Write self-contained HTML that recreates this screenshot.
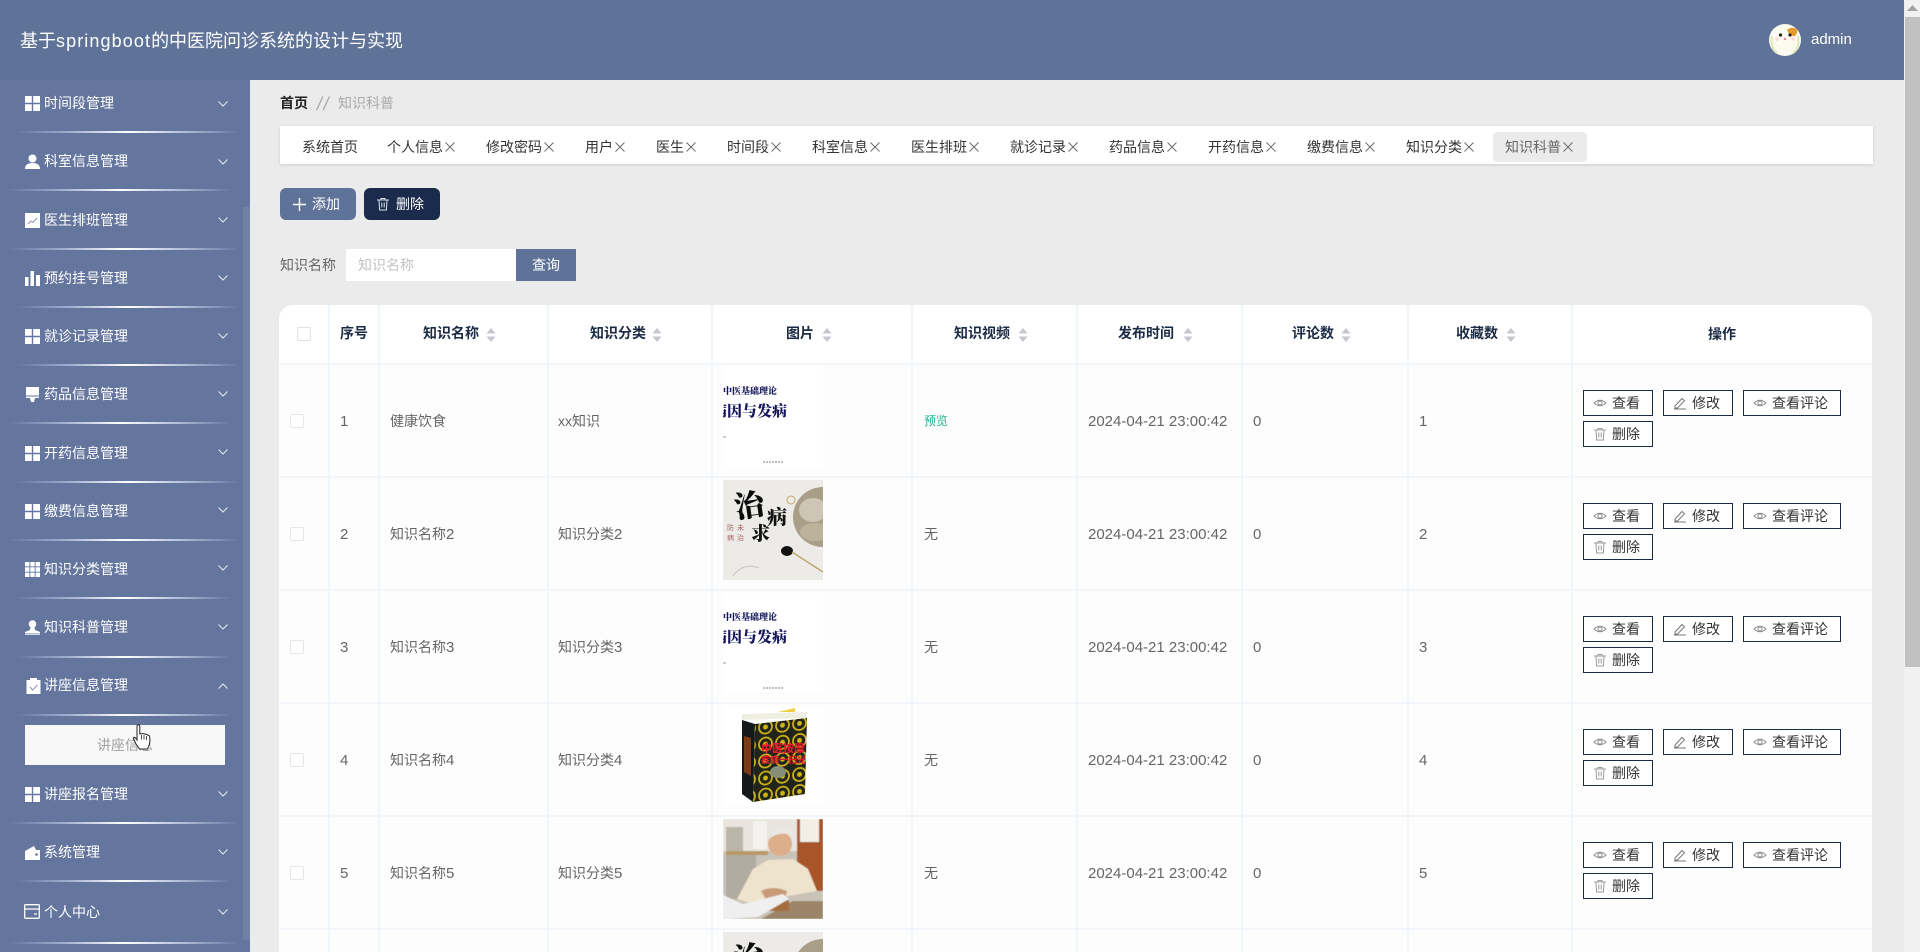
<!DOCTYPE html>
<html lang="zh"><head><meta charset="utf-8"><title>知识科普</title>
<style>
*{box-sizing:border-box;margin:0;padding:0}
html,body{width:1920px;height:952px;overflow:hidden;background:#ebebeb;font-family:"Liberation Sans","Noto Sans CJK SC",sans-serif;font-size:14px}
.a{position:absolute}
#hd{left:0;top:0;width:1904px;height:80px;background:#5f7398;color:#fff}
#side{left:0;top:80px;width:250px;height:872px;background:#64759e}
.mi{position:absolute;left:44px;color:#fff;font-size:14px;line-height:20px;height:20px;white-space:nowrap}
.ic{position:absolute;left:25px;width:15px;height:15px}
.ch{position:absolute;left:218px;width:10px;height:6px}
.ln{position:absolute;height:2px;margin-top:1px;background:linear-gradient(90deg,rgba(180,195,225,0),#a3b1d1 25%,#fff 50%,#b2bfda 75%,rgba(180,195,225,0))}
.tab{position:absolute;top:132px;height:30px;line-height:30px;color:#333;white-space:nowrap}
.tab svg{position:absolute;top:10px;width:10px;height:10px}
.th{position:absolute;top:0;height:59px;line-height:57px;font-weight:700;color:#1c2b45;white-space:nowrap}
.so{position:absolute;top:23px;width:10px;height:14px}
.vl{position:absolute;top:0;width:2px;background:#f0f7fb;height:650px}
.row{position:absolute;left:0;width:1593px;height:113px;background:#fdfdfe;border-top:2px solid #f2f6fa}
.t{position:absolute;top:1px;height:111px;line-height:111px;color:#666;white-space:nowrap}
.t i{font-style:normal;font-size:15px}
.n{font-size:15px}
.cb{position:absolute;left:11px;top:49px;width:14px;height:14px;border:1px solid #e3e6ea;background:#fff;border-radius:2px}
.b{position:absolute;height:26px;border:1px solid #1c2b45;background:#fff;color:#333;line-height:24px;white-space:nowrap;width:70px}
.b span{position:absolute;left:28px;top:0}
.b svg{position:absolute;left:9px;top:5px;width:14px;height:14px}
.im{position:absolute;left:444px;top:2px;width:100px;height:100px;overflow:hidden}
</style></head><body>

<div class="a" id="hd">
<div class="a" style="left:20px;top:28px;font-size:18px;line-height:26px;white-space:nowrap">基于<span style="letter-spacing:1.1px">springboot</span>的中医院问诊系统的设计与实现</div>
<svg class="a" style="left:1769px;top:24px" width="32" height="32" viewBox="0 0 32 32"><circle cx="16" cy="16" r="16" fill="#fbfbef"/><path d="M3 12Q1 24 8 29M29 12Q31 24 24 29" stroke="#e4e8b4" stroke-width="2" fill="none"/><path d="M18 6Q22 2 28 5Q29 9 26 12Q21 13 18 6Z" fill="#e59a2c"/><circle cx="11.500" cy="11" r="1.600" fill="#222"/><circle cx="21" cy="11" r="1.600" fill="#222"/><circle cx="16" cy="15" r="1.200" fill="#e88"/><circle cx="8" cy="15" r="2" fill="#fbdede"/><circle cx="24" cy="15" r="2" fill="#fbdede"/></svg>
<div class="a" style="left:1811px;top:30px;line-height:20px;color:#fff;font-size:15px">admin</div>
</div>

<div class="a" style="left:1904px;top:0;width:16px;height:952px;background:#f1f1f1"></div>
<div class="a" style="left:1905px;top:17px;width:15px;height:650px;background:#c1c1c1"></div>
<svg class="a" style="left:1907px;top:5px" width="11" height="7"><path d="M0 6L5.500 0L11 6Z" fill="#a3a3a3"/></svg>

<div class="a" id="side"></div>
<div class="a" style="left:243px;top:207px;width:7px;height:733px;background:#6f81a5"></div>

<svg width="0" height="0" style="position:absolute"><defs>
<symbol id="g" viewBox="0 0 15 15"><path fill="#fff" d="M0 0h6.800v6.800H0zM8.200 0H15v6.800H8.200zM0 8.200h6.800V15H0zM8.200 8.200H15V15H8.200z"/></symbol>
<symbol id="chv" viewBox="0 0 10 6"><path d="M.5.500L5 5 9.500.5" fill="none" stroke="#e6eaf3" stroke-width="1"/></symbol>
<symbol id="chu" viewBox="0 0 10 6"><path d="M.5 5.500L5 1l4.500 4.500" fill="none" stroke="#e6eaf3" stroke-width="1"/></symbol>
<symbol id="x" viewBox="0 0 10 10"><path d="M.5.500l9 9M9.500.5l-9 9" stroke="#666" stroke-width=".9" fill="none"/></symbol>
<symbol id="eye" viewBox="0 0 14 14"><path d="M1 7Q7 1.500 13 7Q7 12.500 1 7Z" fill="none" stroke="#8c8c8c"/><circle cx="7" cy="7" r="2" fill="none" stroke="#8c8c8c"/></symbol>
<symbol id="pen" viewBox="0 0 14 14"><path d="M2 10L9 2.500l2.500 2.300L4.500 12H2zM1 13h12" fill="none" stroke="#777"/></symbol>
<symbol id="tr" viewBox="0 0 14 14"><path d="M1 3h12M3 3l.6 10h6.800L11 3M5 3V1.500h4V3M5.800 5.500v5M8.200 5.500v5" fill="none" stroke="#9a9a9a"/></symbol>
<symbol id="srt" viewBox="0 0 10 14"><path d="M5 0L9.500 5.500H.5zM5 14L.5 8.500h9z" fill="#c4c7cc"/></symbol>
<pattern id="sw" width="17" height="17" patternUnits="userSpaceOnUse" patternTransform="skewY(-6)"><rect width="17" height="17" fill="#20241a"/><circle cx="8.500" cy="8.500" r="6.500" fill="none" stroke="#cdb316" stroke-width="1.800"/><circle cx="8.500" cy="8.500" r="2.500" fill="#cdb316"/></pattern>
<filter id="sf"><feGaussianBlur stdDeviation=".6"/></filter>
</defs></svg>

<svg class="ic" style="top:96px"><use href="#g"/></svg><div class="mi" style="top:93px">时间段管理</div><svg class="ch" style="top:101px"><use href="#chv"/></svg>
<div class="ln" style="left:16px;width:224px;top:130px"></div>
<svg class="ic" style="top:154px" viewBox="0 0 15 15"><circle cx="7.500" cy="4.500" r="4" fill="#fff"/><path d="M0 15Q0 9 7.500 9T15 15Z" fill="#fff"/></svg><div class="mi" style="top:151px">科室信息管理</div><svg class="ch" style="top:159px"><use href="#chv"/></svg>
<div class="ln" style="left:8px;width:224px;top:188px"></div>
<svg class="ic" style="top:213px" viewBox="0 0 15 15"><rect width="15" height="15" fill="#fff"/><path d="M3 11l3-3 2 1.500L12 5" stroke="#8794b3" fill="none"/></svg><div class="mi" style="top:210px">医生排班管理</div><svg class="ch" style="top:217px"><use href="#chv"/></svg>
<div class="ln" style="left:8px;width:232px;top:247px"></div>
<svg class="ic" style="top:271px" viewBox="0 0 15 15"><path fill="#fff" d="M0 6h3.500v9H0zM5.500 0H9v15H5.500zM11 4h4v11h-4z"/></svg><div class="mi" style="top:268px">预约挂号管理</div><svg class="ch" style="top:275px"><use href="#chv"/></svg>
<div class="ln" style="left:16px;width:224px;top:305px"></div>
<svg class="ic" style="top:329px"><use href="#g"/></svg><div class="mi" style="top:326px">就诊记录管理</div><svg class="ch" style="top:333px"><use href="#chv"/></svg>
<div class="ln" style="left:16px;width:224px;top:363px"></div>
<svg class="ic" style="top:387px" viewBox="0 0 15 15"><path fill="#fff" d="M1 0h13v8.500H1zM1 9.500h13V11H10l-1 4H6l-1-4H1z"/></svg><div class="mi" style="top:384px">药品信息管理</div><svg class="ch" style="top:391px"><use href="#chv"/></svg>
<div class="ln" style="left:8px;width:224px;top:421px"></div>
<svg class="ic" style="top:446px"><use href="#g"/></svg><div class="mi" style="top:443px">开药信息管理</div><svg class="ch" style="top:449px"><use href="#chv"/></svg>
<div class="ln" style="left:16px;width:224px;top:480px"></div>
<svg class="ic" style="top:504px"><use href="#g"/></svg><div class="mi" style="top:501px">缴费信息管理</div><svg class="ch" style="top:507px"><use href="#chv"/></svg>
<div class="ln" style="left:8px;width:232px;top:538px"></div>
<svg class="ic" style="top:562px" viewBox="0 0 15 15"><path fill="#fff" d="M0 0h4.400v4.400H0zM5.300 0h4.400v4.400H5.300zM10.600 0H15v4.400h-4.400zM0 5.300h4.400v4.400H0zM5.300 5.300h4.400v4.400H5.300zM10.600 5.300H15v4.400h-4.400zM0 10.600h4.400V15H0zM5.300 10.600h4.400V15H5.300zM10.600 10.600H15V15h-4.400z"/></svg><div class="mi" style="top:559px">知识分类管理</div><svg class="ch" style="top:565px"><use href="#chv"/></svg>
<div class="ln" style="left:16px;width:216px;top:596px"></div>
<svg class="ic" style="top:620px" viewBox="0 0 15 15"><circle cx="7.500" cy="4" r="3.800" fill="#fff"/><path d="M5.500 7h4l.5 3 5 2v1.500H0V12l5-2zM0 14.200h15V15H0z" fill="#fff"/></svg><div class="mi" style="top:617px">知识科普管理</div><svg class="ch" style="top:624px"><use href="#chv"/></svg>
<div class="ln" style="left:16px;width:216px;top:655px"></div>
<svg class="ic" style="top:678px;left:26px;height:16px" viewBox="0 0 14 16"><path fill="#fff" d="M0 2h3.500V0h7v2H14v14H0z"/><path d="M3.500 9l2.500 3 5-5" stroke="#8794b3" fill="none"/></svg><div class="mi" style="top:675px">讲座信息管理</div><svg class="ch" style="top:683px"><use href="#chu"/></svg>
<div class="ln" style="left:16px;width:216px;top:713px"></div>
<div class="a" style="left:25px;top:725px;width:200px;height:40px;background:#f8f8f8;color:#a0a0a0;text-align:center;line-height:40px">讲座信息</div>
<svg class="a" style="left:132px;top:724px" width="20" height="28" viewBox="0 0 20 28"><path d="M5 2.500Q5 .8 6.300.8T7.800 2.500V10L10.500 9.500 13 10 15.500 10.800 17.500 12Q18.500 17 17 21.500L15.500 25H7.500L4 20 1.500 14.500Q1.500 12.800 3 13.500L5 16Z" fill="#fff" stroke="#222"/><path d="M9.500 11v4.500M12 11v4.500M14.500 12v4" stroke="#222" stroke-width=".8"/></svg>
<svg class="ic" style="top:787px"><use href="#g"/></svg><div class="mi" style="top:784px">讲座报名管理</div><svg class="ch" style="top:791px"><use href="#chv"/></svg>
<div class="ln" style="left:8px;width:232px;top:821px"></div>
<svg class="ic" style="top:845px" viewBox="0 0 15 15"><path fill="#fff" d="M0 6L9 1l2 4h4v10H0z"/><circle cx="11.500" cy="9.500" r="1.300" fill="#64759e"/></svg><div class="mi" style="top:842px">系统管理</div><svg class="ch" style="top:849px"><use href="#chv"/></svg>
<div class="ln" style="left:16px;width:216px;top:879px"></div>
<svg class="ic" style="top:904px;left:24px;width:16px;height:15px" viewBox="0 0 16 15"><rect x=".7" y=".7" width="14.600" height="13.600" rx="1" fill="none" stroke="#fff" stroke-width="1.300"/><path d="M1 5h14M10 10h3" stroke="#fff" stroke-width="1.300"/></svg><div class="mi" style="top:902px">个人中心</div><svg class="ch" style="top:909px"><use href="#chv"/></svg>
<div class="ln" style="left:8px;width:232px;top:941px"></div>

<div class="a" style="left:280px;top:93px;line-height:20px;font-weight:700;color:#222">首页</div>
<div class="a" style="left:317px;top:94px;line-height:20px;color:#aaa;font-style:italic;font-size:18px;letter-spacing:1.500px">//</div>
<div class="a" style="left:338px;top:93px;line-height:20px;color:#aaa">知识科普</div>

<div class="a" style="left:280px;top:126px;width:1593px;height:38px;background:#fff;box-shadow:0 1px 3px rgba(0,0,0,.12)"></div>
<div class="a" style="left:1493px;top:132px;width:94px;height:30px;background:#ebebeb;border-radius:4px"></div>
<div class="tab" style="left:302px">系统首页</div>
<div class="tab" style="left:387px">个人信息<svg style="left:58px"><use href="#x"/></svg></div>
<div class="tab" style="left:486px">修改密码<svg style="left:58px"><use href="#x"/></svg></div>
<div class="tab" style="left:585px">用户<svg style="left:30px"><use href="#x"/></svg></div>
<div class="tab" style="left:656px">医生<svg style="left:30px"><use href="#x"/></svg></div>
<div class="tab" style="left:727px">时间段<svg style="left:44px"><use href="#x"/></svg></div>
<div class="tab" style="left:812px">科室信息<svg style="left:58px"><use href="#x"/></svg></div>
<div class="tab" style="left:911px">医生排班<svg style="left:58px"><use href="#x"/></svg></div>
<div class="tab" style="left:1010px">就诊记录<svg style="left:58px"><use href="#x"/></svg></div>
<div class="tab" style="left:1109px">药品信息<svg style="left:58px"><use href="#x"/></svg></div>
<div class="tab" style="left:1208px">开药信息<svg style="left:58px"><use href="#x"/></svg></div>
<div class="tab" style="left:1307px">缴费信息<svg style="left:58px"><use href="#x"/></svg></div>
<div class="tab" style="left:1406px">知识分类<svg style="left:58px"><use href="#x"/></svg></div>
<div class="tab" style="left:1505px;color:#666">知识科普<svg style="left:58px"><use href="#x"/></svg></div>

<div class="a" style="left:280px;top:188px;width:76px;height:32px;background:#5f7398;border-radius:6px;color:#fff;line-height:32px;padding-left:32px">添加</div>
<svg class="a" style="left:293px;top:198px" width="13" height="13"><path d="M6.500 0v13M0 6.500h13" stroke="#fff" stroke-width="1.400"/></svg>
<div class="a" style="left:364px;top:188px;width:76px;height:32px;background:#1a2b4c;border-radius:6px;color:#fff;line-height:32px;padding-left:32px">删除</div>
<svg class="a" style="left:376px;top:197px" width="14" height="14" viewBox="0 0 14 14"><path d="M1 3h12M3 3l.6 10h6.800L11 3M5 3V1.500h4V3M5.800 5.500v5M8.200 5.500v5" fill="none" stroke="#dfe4ee"/></svg>

<div class="a" style="left:280px;top:255px;line-height:20px;color:#666">知识名称</div>
<div class="a" style="left:346px;top:249px;width:170px;height:32px;background:#fff;color:#c3c3c3;line-height:32px;padding-left:12px">知识名称</div>
<div class="a" style="left:516px;top:249px;width:60px;height:32px;background:#5f7398;color:#fff;line-height:32px;text-align:center">查询</div>

<div class="a" id="tb" style="left:279px;top:305px;width:1593px;height:647px;background:#fff;border-radius:14px 14px 0 0;overflow:hidden">
<div style="position:absolute;left:18px;top:22px;width:14px;height:14px;border:1px solid #dfe2e6;border-radius:2px;background:#fff"></div>
<div class="th" style="left:61px">序号</div>
<div class="th" style="left:144px">知识名称</div><svg class="so" style="left:207px"><use href="#srt"/></svg>
<div class="th" style="left:311px">知识分类</div><svg class="so" style="left:373px"><use href="#srt"/></svg>
<div class="th" style="left:507px">图片</div><svg class="so" style="left:543px"><use href="#srt"/></svg>
<div class="th" style="left:675px">知识视频</div><svg class="so" style="left:739px"><use href="#srt"/></svg>
<div class="th" style="left:839px">发布时间</div><svg class="so" style="left:904px"><use href="#srt"/></svg>
<div class="th" style="left:1013px">评论数</div><svg class="so" style="left:1062px"><use href="#srt"/></svg>
<div class="th" style="left:1177px">收藏数</div><svg class="so" style="left:1227px"><use href="#srt"/></svg>
<div class="th" style="left:1429px;top:1px">操作</div>

<div class="row" style="top:58px"><div class="cb"></div><div class="t n" style="left:61px">1</div><div class="t" style="left:111px">健康饮食</div><div class="t" style="left:279px">xx知识</div>
<div class="im"><svg width="100" height="100" viewBox="0 0 100 100"><rect width="100" height="100" fill="#fff"/><text x="0" y="27" font-size="9" font-weight="900" fill="#14145a" font-family="'Noto Serif CJK SC',serif">中医基础理论</text><text x="-11" y="49" font-size="15" font-weight="900" fill="#14145a" font-family="'Noto Serif CJK SC',serif">病因与发病</text><path d="M0 70h3" stroke="#999"/><path d="M40 95h21" stroke="#aaa" stroke-width="1.500" stroke-dasharray="2 1"/></svg></div>
<div class="t" style="left:645px;font-size:12px;color:#1fb38f">预览</div><div class="t n" style="left:809px">2024-04-21 23:00:42</div><div class="t n" style="left:974px">0</div><div class="t n" style="left:1140px">1</div>
<div class="b" style="left:1304px;top:25px"><svg><use href="#eye"/></svg><span>查看</span></div><div class="b" style="left:1384px;top:25px"><svg><use href="#pen"/></svg><span>修改</span></div><div class="b" style="left:1464px;top:25px;width:98px"><svg><use href="#eye"/></svg><span>查看评论</span></div><div class="b" style="left:1304px;top:56px"><svg><use href="#tr"/></svg><span>删除</span></div></div>

<div class="row" style="top:171px"><div class="cb"></div><div class="t n" style="left:61px">2</div><div class="t" style="left:111px">知识名称<i>2</i></div><div class="t" style="left:279px">知识分类<i>2</i></div>
<div class="im"><svg width="100" height="100" viewBox="0 0 100 100"><rect width="100" height="100" fill="#ecebe8"/><circle cx="100" cy="37" r="30" fill="#a99e88"/><ellipse cx="90" cy="30" rx="14" ry="12" fill="#cdc6b4"/><ellipse cx="92" cy="52" rx="15" ry="9" fill="#bdb29c"/><text x="13" y="38" font-size="30" font-weight="900" fill="#0c0c0c" font-family="'Noto Serif CJK SC',serif" transform="rotate(-8 13 38)">治</text><text x="44" y="44" font-size="20" font-weight="900" fill="#111" font-family="'Noto Serif CJK SC',serif">病</text><text x="28" y="60" font-size="19" font-weight="900" fill="#111" font-family="'Noto Serif CJK SC',serif">求</text><text x="4" y="50" font-size="7" fill="#a66" font-family="'Noto Sans CJK SC',sans-serif">防</text><text x="4" y="60" font-size="7" fill="#a66" font-family="'Noto Sans CJK SC',sans-serif">病</text><text x="14" y="50" font-size="7" fill="#a66" font-family="'Noto Sans CJK SC',sans-serif">未</text><text x="14" y="60" font-size="7" fill="#a66" font-family="'Noto Sans CJK SC',sans-serif">治</text><ellipse cx="64" cy="71" rx="6" ry="5" fill="#111"/><path d="M69 72L100 92" stroke="#bfa56b" stroke-width="1.500"/><path d="M10 96Q20 82 36 88" stroke="#c4c4c0" fill="none"/><circle cx="68" cy="20" r="4" fill="none" stroke="#c8a860"/></svg></div>
<div class="t" style="left:645px">无</div><div class="t n" style="left:809px">2024-04-21 23:00:42</div><div class="t n" style="left:974px">0</div><div class="t n" style="left:1140px">2</div>
<div class="b" style="left:1304px;top:25px"><svg><use href="#eye"/></svg><span>查看</span></div><div class="b" style="left:1384px;top:25px"><svg><use href="#pen"/></svg><span>修改</span></div><div class="b" style="left:1464px;top:25px;width:98px"><svg><use href="#eye"/></svg><span>查看评论</span></div><div class="b" style="left:1304px;top:56px"><svg><use href="#tr"/></svg><span>删除</span></div></div>

<div class="row" style="top:284px"><div class="cb"></div><div class="t n" style="left:61px">3</div><div class="t" style="left:111px">知识名称<i>3</i></div><div class="t" style="left:279px">知识分类<i>3</i></div>
<div class="im"><svg width="100" height="100" viewBox="0 0 100 100"><rect width="100" height="100" fill="#fff"/><text x="0" y="27" font-size="9" font-weight="900" fill="#14145a" font-family="'Noto Serif CJK SC',serif">中医基础理论</text><text x="-11" y="49" font-size="15" font-weight="900" fill="#14145a" font-family="'Noto Serif CJK SC',serif">病因与发病</text><path d="M0 70h3" stroke="#999"/><path d="M40 95h21" stroke="#aaa" stroke-width="1.500" stroke-dasharray="2 1"/></svg></div>
<div class="t" style="left:645px">无</div><div class="t n" style="left:809px">2024-04-21 23:00:42</div><div class="t n" style="left:974px">0</div><div class="t n" style="left:1140px">3</div>
<div class="b" style="left:1304px;top:25px"><svg><use href="#eye"/></svg><span>查看</span></div><div class="b" style="left:1384px;top:25px"><svg><use href="#pen"/></svg><span>修改</span></div><div class="b" style="left:1464px;top:25px;width:98px"><svg><use href="#eye"/></svg><span>查看评论</span></div><div class="b" style="left:1304px;top:56px"><svg><use href="#tr"/></svg><span>删除</span></div></div>

<div class="row" style="top:397px"><div class="cb"></div><div class="t n" style="left:61px">4</div><div class="t" style="left:111px">知识名称<i>4</i></div><div class="t" style="left:279px">知识分类<i>4</i></div>
<div class="im"><svg width="100" height="100" viewBox="0 0 100 100"><rect width="100" height="100" fill="#fff"/><path d="M19 8L84 6 84 12 19 14Z" fill="#efeee2"/><path d="M55 6L72 2 72 6Z" fill="#f0d040"/><path d="M19 14L32 18 30 96 19 88Z" fill="#14181a"/><path d="M32 18L84 12 82 88 30 96Z" fill="url(#sw)"/><text x="38" y="46" font-size="11" font-weight="900" fill="#e01a2e" font-family="'Noto Sans CJK SC',sans-serif">中医按摩</text><text x="38" y="57" font-size="9" font-weight="900" fill="#e01a2e" font-family="'Noto Sans CJK SC',sans-serif">疾病一扫光</text><ellipse cx="55" cy="66" rx="8" ry="6" fill="#858f78"/><path d="M21 30L28 32V70L21 66Z" fill="#7a3a18"/></svg></div>
<div class="t" style="left:645px">无</div><div class="t n" style="left:809px">2024-04-21 23:00:42</div><div class="t n" style="left:974px">0</div><div class="t n" style="left:1140px">4</div>
<div class="b" style="left:1304px;top:25px"><svg><use href="#eye"/></svg><span>查看</span></div><div class="b" style="left:1384px;top:25px"><svg><use href="#pen"/></svg><span>修改</span></div><div class="b" style="left:1464px;top:25px;width:98px"><svg><use href="#eye"/></svg><span>查看评论</span></div><div class="b" style="left:1304px;top:56px"><svg><use href="#tr"/></svg><span>删除</span></div></div>

<div class="row" style="top:510px"><div class="cb"></div><div class="t n" style="left:61px">5</div><div class="t" style="left:111px">知识名称<i>5</i></div><div class="t" style="left:279px">知识分类<i>5</i></div>
<div class="im"><svg width="100" height="100" viewBox="0 0 100 100"><g filter="url(#sf)"><rect width="100" height="100" fill="#c9c3b8"/><rect width="74" height="32" fill="#e8e4de"/><rect x="74" width="26" height="72" fill="#a8552a"/><rect x="77" width="19" height="23" fill="#f3efe6"/><rect x="30" y="2" width="14" height="28" fill="#f4f2ee"/><rect x="3" y="32" width="42" height="4" fill="#b99868"/><rect x="3" y="8" width="17" height="24" fill="#bcb5aa"/><rect x="3" y="36" width="30" height="44" fill="#b1aca0"/><path d="M14 80L30 50 45 41 70 40 85 50 94 72 60 78 30 85Z" fill="#eee3cd"/><circle cx="57" cy="25" r="12" fill="#dcae8a"/><path d="M46 20Q50 6 62 8Q72 12 72 26L68 16Q56 12 46 20Z" fill="#e9e7e4"/><path d="M38 100L70 82H100V100Z" fill="#9c8468"/><path d="M40 80Q56 74 66 82L66 92H46Z" fill="#a56c3c"/><path d="M38 72Q50 66 64 72L62 80 44 82Z" fill="#c99a78"/><path d="M0 76L20 85 60 75 66 80 35 98 0 100Z" fill="#efefef"/></g></svg></div>
<div class="t" style="left:645px">无</div><div class="t n" style="left:809px">2024-04-21 23:00:42</div><div class="t n" style="left:974px">0</div><div class="t n" style="left:1140px">5</div>
<div class="b" style="left:1304px;top:25px"><svg><use href="#eye"/></svg><span>查看</span></div><div class="b" style="left:1384px;top:25px"><svg><use href="#pen"/></svg><span>修改</span></div><div class="b" style="left:1464px;top:25px;width:98px"><svg><use href="#eye"/></svg><span>查看评论</span></div><div class="b" style="left:1304px;top:56px"><svg><use href="#tr"/></svg><span>删除</span></div></div>

<div class="row" style="top:623px">
<div class="im"><svg width="100" height="100" viewBox="0 0 100 100"><rect width="100" height="100" fill="#ecebe8"/><circle cx="100" cy="37" r="30" fill="#a99e88"/><text x="13" y="38" font-size="30" font-weight="900" fill="#0c0c0c" font-family="'Noto Serif CJK SC',serif" transform="rotate(-8 13 38)">治</text></svg></div></div>

<div class="vl" style="left:49px"></div><div class="vl" style="left:99px"></div><div class="vl" style="left:268px"></div><div class="vl" style="left:432px"></div><div class="vl" style="left:632px"></div><div class="vl" style="left:797px"></div><div class="vl" style="left:962px"></div><div class="vl" style="left:1128px"></div><div class="vl" style="left:1292px"></div>
</div>
</body></html>
